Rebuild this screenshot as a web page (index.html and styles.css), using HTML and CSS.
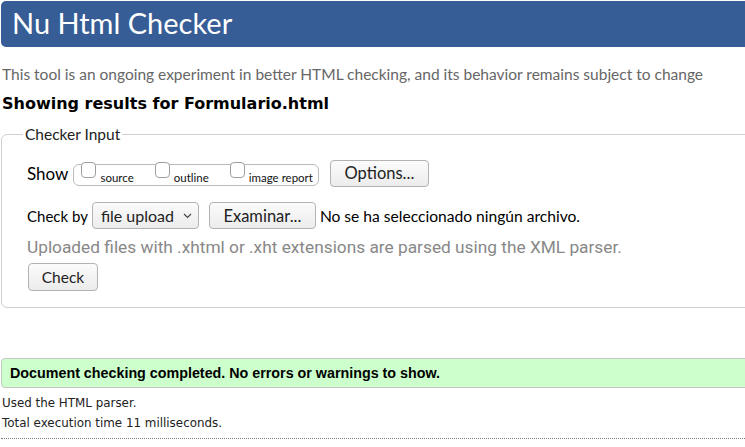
FILE: index.html
```html
<!DOCTYPE html>
<html lang="en">
<head>
<meta charset="utf-8">
<title>Nu Html Checker</title>
<link rel="stylesheet" href="styles.css">
</head>
<body>
<div class="page">
  <header class="masthead"><h1 class="masthead-title">Nu Html Checker</h1></header>
  <p class="lede">This tool is an ongoing experiment in better HTML checking, and its behavior remains subject to change</p>
  <h2 class="results-title">Showing results for Formulario.html</h2>
  <fieldset class="checker">
    <legend class="checker-legend">Checker Input</legend>
    <div class="row show-row">
      <span class="row-label show-label">Show</span>
      <div class="opts">
        <label class="opt"><span class="box"></span><span class="opt-text">source</span></label>
        <label class="opt"><span class="box"></span><span class="opt-text">outline</span></label>
        <label class="opt"><span class="box"></span><span class="opt-text">image report</span></label>
      </div>
      <button class="btn btn-options">Options...</button>
    </div>
    <div class="row checkby-row">
      <span class="row-label checkby-label">Check by</span>
      <div class="select"><span>file upload</span>
        <svg class="chev" width="9" height="6" viewBox="0 0 9 6"><path d="M1 1l3.5 3.5L8 1" fill="none" stroke="#444" stroke-width="1.2"/></svg>
      </div>
      <button class="btn btn-browse">Examinar...</button>
      <span class="file-status">No se ha seleccionado ningún archivo.</span>
    </div>
    <p class="hint">Uploaded files with .xhtml or .xht extensions are parsed using the XML parser.</p>
    <button class="btn btn-check">Check</button>
  </fieldset>
  <p class="success">Document checking completed. No errors or warnings to show.</p>
  <div class="meta-block">
    <p class="meta">Used the HTML parser.</p>
    <p class="meta">Total execution time 11 milliseconds.</p>
  </div>
  <hr class="dotted">
</div>
</body>
</html>
```
FILE: styles.css
```css
html, body {
  margin: 0;
  padding: 0;
  background: #fff;
  overflow: hidden;
}
body {
  font-family: "Liberation Sans", sans-serif;
  color: #000;
}
.page {
  width: 780px;
  padding: 1px 0 0 1px;
}
.masthead {
  background: #365d95;
  border-radius: 5px;
  height: 46px;
  box-sizing: border-box;
  padding: 0 0 3px 11px;
  display: flex;
  align-items: center;
}
.masthead-title {
  margin: 0;
  font-family: Lato, "Open Sans", sans-serif;
  font-weight: 400;
  font-size: 29px;
  color: #fff;
}
.lede {
  margin: 18px 0 0 1px;
  font-family: Lato, sans-serif;
  font-size: 15.5px;
  line-height: 18px;
  color: #666;
}
.results-title {
  margin: 11px 0 0 1px;
  font-family: "DejaVu Sans", sans-serif;
  font-weight: 700;
  font-size: 16px;
  line-height: 20px;
}
.checker {
  margin: 12px 0 0 0;
  border: 1px solid #cfcfcf;
  border-radius: 6px 0 0 6px;
  padding: 17px 0 16px 25px;
  font-family: Lato, sans-serif;
}
.checker-legend {
  margin-left: -4px;
  padding: 0 2px;
  font-size: 15.5px;
  line-height: 17px;
  color: #222;
}
.row {
  display: flex;
  align-items: center;
}
.show-row { height: 26px; }
.checkby-row { height: 27px; margin-top: 16px; }
.show-label {
  font-size: 17px;
  margin-right: 5px;
}
.opts {
  display: flex;
  align-items: flex-end;
  height: 20px;
  border: 1px solid #bbb;
  border-radius: 6px;
  padding: 0 5px 0 7px;
  gap: 21px;
  margin-top: 4px;
}
.opt {
  display: flex;
  align-items: flex-end;
  gap: 4px;
  position: relative;
  top: -1px;
}
.box {
  width: 15px;
  height: 16px;
  border: 1px solid #a0a0a0;
  border-radius: 4px;
  box-sizing: border-box;
  background: #fff;
  position: relative;
  top: -6px;
}
.opt-text {
  font-size: 11.5px;
  line-height: 13px;
  color: #111;
}
.btn {
  font-family: Lato, sans-serif;
  background: linear-gradient(#fbfbfb, #ececec);
  border: 1px solid #b3b3b3;
  border-radius: 4px;
  color: #222;
  padding: 0;
  box-sizing: border-box;
}
.btn-options {
  margin-left: 11px;
  width: 99px;
  height: 27px;
  font-size: 16.5px;
}
.checkby-label { font-size: 15px; margin-right: 4px; }
.select {
  width: 107px;
  height: 27px;
  box-sizing: border-box;
  border: 1px solid #b3b3b3;
  border-radius: 4px;
  background: linear-gradient(#fbfbfb, #ececec);
  display: flex;
  align-items: center;
  padding-left: 8px;
  gap: 9px;
  font-size: 16px;
  color: #222;
}
.btn-browse {
  margin-left: 10px;
  width: 107px;
  height: 27px;
  font-size: 16.5px;
}
.file-status {
  margin-left: 4px;
  font-size: 15.6px;
}
.hint {
  margin: 8px 0 0;
  font-family: Roboto, sans-serif;
  font-size: 17.3px;
  line-height: 20px;
  color: #888;
}
.btn-check {
  display: block;
  margin: 6px 0 0 1px;
  width: 70px;
  height: 28px;
  font-size: 15.5px;
}
.success {
  margin: 50px 0 0;
  background: #ccffcc;
  border: 1px solid #c6c6c6;
  border-radius: 4px 0 0 4px;
  height: 30px;
  box-sizing: border-box;
  padding-left: 8px;
  display: flex;
  align-items: center;
  font-weight: 700;
  font-size: 14.3px;
}
.meta-block {
  margin-top: 5px;
}
.meta {
  margin: 0 0 0 1px;
  font-family: "DejaVu Sans", sans-serif;
  font-size: 11.9px;
  line-height: 20px;
  color: #222;
}
.dotted {
  margin: 5px 0 0;
  border: 0;
  border-top: 1px dotted #777;
}
```
